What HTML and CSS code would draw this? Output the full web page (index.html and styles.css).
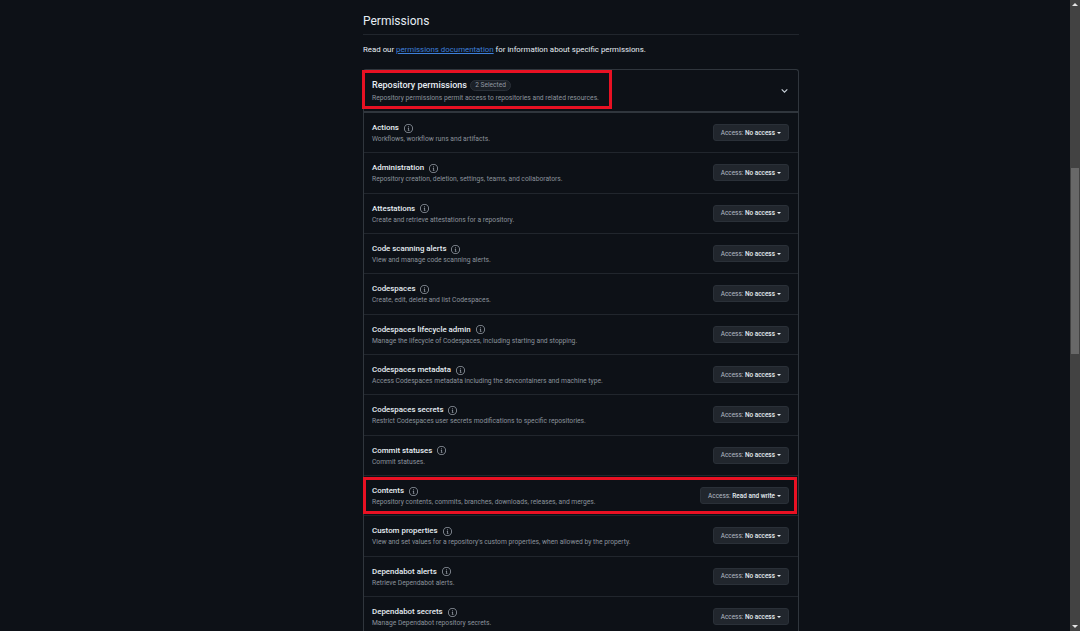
FILE: index.html
```html
<!DOCTYPE html>
<html lang="en">
<head>
  <meta charset="UTF-8" />
  <title>Permissions</title>
  <link rel="stylesheet" href="styles.css">
</head>
<body>
  <div class="scrollbar">
    <span class="arrow-up"></span>
    <div class="track"><div class="thumb"></div></div>
    <span class="arrow-down"></span>
  </div>
  <div class="container">
    <h2 class="title">Permissions</h2>
    <p class="intro">Read our <a href="#">permissions documentation</a> for information about specific permissions.</p>

    <div class="panel">
      <div class="panel-header">
        <div class="red-box header-box"></div>
        <div>
          <div class="panel-title">Repository permissions <span class="counter">2 Selected</span></div>
          <div class="desc">Repository permissions permit access to repositories and related resources.</div>
        </div>
        <svg class="chevron" viewBox="0 0 16 16"><path d="M3 6l5 5 5-5" fill="none" stroke="currentColor" stroke-width="2"/></svg>
      </div>
      <div id="rows"></div>
    </div>
  </div>

  <script>
    const rows = [
      ["Actions", "Workflows, workflow runs and artifacts."],
      ["Administration", "Repository creation, deletion, settings, teams, and collaborators."],
      ["Attestations", "Create and retrieve attestations for a repository."],
      ["Code scanning alerts", "View and manage code scanning alerts."],
      ["Codespaces", "Create, edit, delete and list Codespaces."],
      ["Codespaces lifecycle admin", "Manage the lifecycle of Codespaces, including starting and stopping."],
      ["Codespaces metadata", "Access Codespaces metadata including the devcontainers and machine type."],
      ["Codespaces secrets", "Restrict Codespaces user secrets modifications to specific repositories."],
      ["Commit statuses", "Commit statuses."],
      ["Contents", "Repository contents, commits, branches, downloads, releases, and merges.", "Read and write"],
      ["Custom properties", "View and set values for a repository's custom properties, when allowed by the property."],
      ["Dependabot alerts", "Retrieve Dependabot alerts."],
      ["Dependabot secrets", "Manage Dependabot repository secrets."]
    ];
    const info = '<svg class="info" viewBox="0 0 16 16"><path fill="currentColor" d="M0 8a8 8 0 1 1 16 0A8 8 0 0 1 0 8Zm8-6.5a6.5 6.5 0 1 0 0 13 6.5 6.5 0 0 0 0-13ZM6.5 7.75A.75.75 0 0 1 7.25 7h1a.75.75 0 0 1 .75.75v2.75h.25a.75.75 0 0 1 0 1.5h-2a.75.75 0 0 1 0-1.5h.25v-2h-.25a.75.75 0 0 1-.75-.75ZM8 6a1 1 0 1 1 0-2 1 1 0 0 1 0 2Z"/></svg>';
    const box = document.getElementById("rows");
    rows.forEach(r => {
      const row = document.createElement("div");
      row.className = "row";
      const red = r[2] ? '<div class="red-box row-box"></div>' : '';
      row.innerHTML = red +
        '<div class="row-text"><div class="row-title">' + r[0] + info + '</div>' +
        '<div class="desc">' + r[1] + '</div></div>' +
        '<button class="access">Access: <b>' + (r[2] || "No access") + '</b><span class="caret"></span></button>';
      box.appendChild(row);
    });
  </script>
</body>
</html>
```

FILE: styles.css
```css
html, body {
  height: 631px;
  overflow: hidden;
}
body {
  margin: 0;
  background-color: #0d1117;
  color: #e6edf3;
  font-family: Roboto, sans-serif;
}
.container {
  width: 436px;
  margin-left: 363px;
  padding-top: 13px;
}
.title {
  margin: 0;
  font-size: 12px;
  line-height: 16px;
  font-weight: 400;
  padding-bottom: 5px;
  border-bottom: 1px solid #21262d;
}
.intro {
  margin: 9px 0 0;
  font-size: 7.85px;
  line-height: 12px;
}
.intro a {
  color: #3d7fd9;
}
.panel {
  margin-top: 13px;
  border: 1px solid #30363d;
  border-bottom: 0;
  border-radius: 3px 3px 0 0;
}
.panel-header {
  position: relative;
  display: flex;
  justify-content: space-between;
  align-items: center;
  height: 41px;
  padding: 0 9px 0 8px;
  border-bottom: 2px solid #30363d;
}
.panel-title {
  font-size: 9px;
  line-height: 13px;
  font-weight: 500;
}
.counter {
  display: inline-block;
  margin-left: 1px;
  padding: 0 4px;
  font-size: 6.6px;
  line-height: 9px;
  font-weight: 400;
  color: #9198a1;
  background: #1b2027;
  border: 1px solid #2a3038;
  border-radius: 6px;
  vertical-align: 1px;
}
.desc {
  font-size: 6.72px;
  line-height: 10px;
  color: #8b929b;
}
.panel-header .desc {
  margin-top: 1px;
}
.chevron {
  width: 9px;
  height: 9px;
  color: #c9d1d9;
}
.row {
  position: relative;
  display: flex;
  justify-content: space-between;
  align-items: center;
  box-sizing: content-box;
  height: 38.33px;
  padding: 1px 9px 0 8px;
  border-bottom: 1px solid #21262d;
}
.row-title {
  display: flex;
  align-items: center;
  gap: 5px;
  font-size: 7.9px;
  line-height: 12px;
  font-weight: 500;
}
.info {
  width: 9px;
  height: 9px;
  color: #9198a1;
}
.access {
  display: flex;
  align-items: center;
  height: 17px;
  margin-top: -1px;
  padding: 0 7px;
  font-family: inherit;
  font-size: 6.45px;
  color: #b4bbc4;
  background: #21262d;
  border: 1px solid #2a3038;
  border-radius: 3px;
  white-space: pre;
}
.access b {
  font-weight: 500;
  color: #e6edf3;
}
.caret {
  margin-left: 2px;
  border-top: 2.5px solid #e6edf3;
  border-left: 2.5px solid transparent;
  border-right: 2.5px solid transparent;
}
.red-box {
  position: absolute;
  border: 3px solid #e81123;
  pointer-events: none;
}
.header-box {
  left: -2px;
  top: 0;
  width: 244px;
  height: 33px;
}
.row-box {
  left: -1px;
  top: 1px;
  width: 428px;
  height: 31px;
}
.scrollbar {
  position: fixed;
  top: 0;
  right: 0;
  bottom: 0;
  width: 10px;
  display: flex;
  flex-direction: column;
  align-items: center;
  background: #424242;
}
.track {
  flex: 1;
  width: 100%;
}
.thumb {
  margin: 159px 1px 0;
  height: 186px;
  background: #686868;
}
.arrow-up, .arrow-down {
  width: 0;
  margin: 3px 0;
  border-left: 3px solid transparent;
  border-right: 3px solid transparent;
}
.arrow-up {
  border-bottom: 3px solid #e6e6e6;
}
.arrow-down {
  border-top: 3px solid #e6e6e6;
}
```
